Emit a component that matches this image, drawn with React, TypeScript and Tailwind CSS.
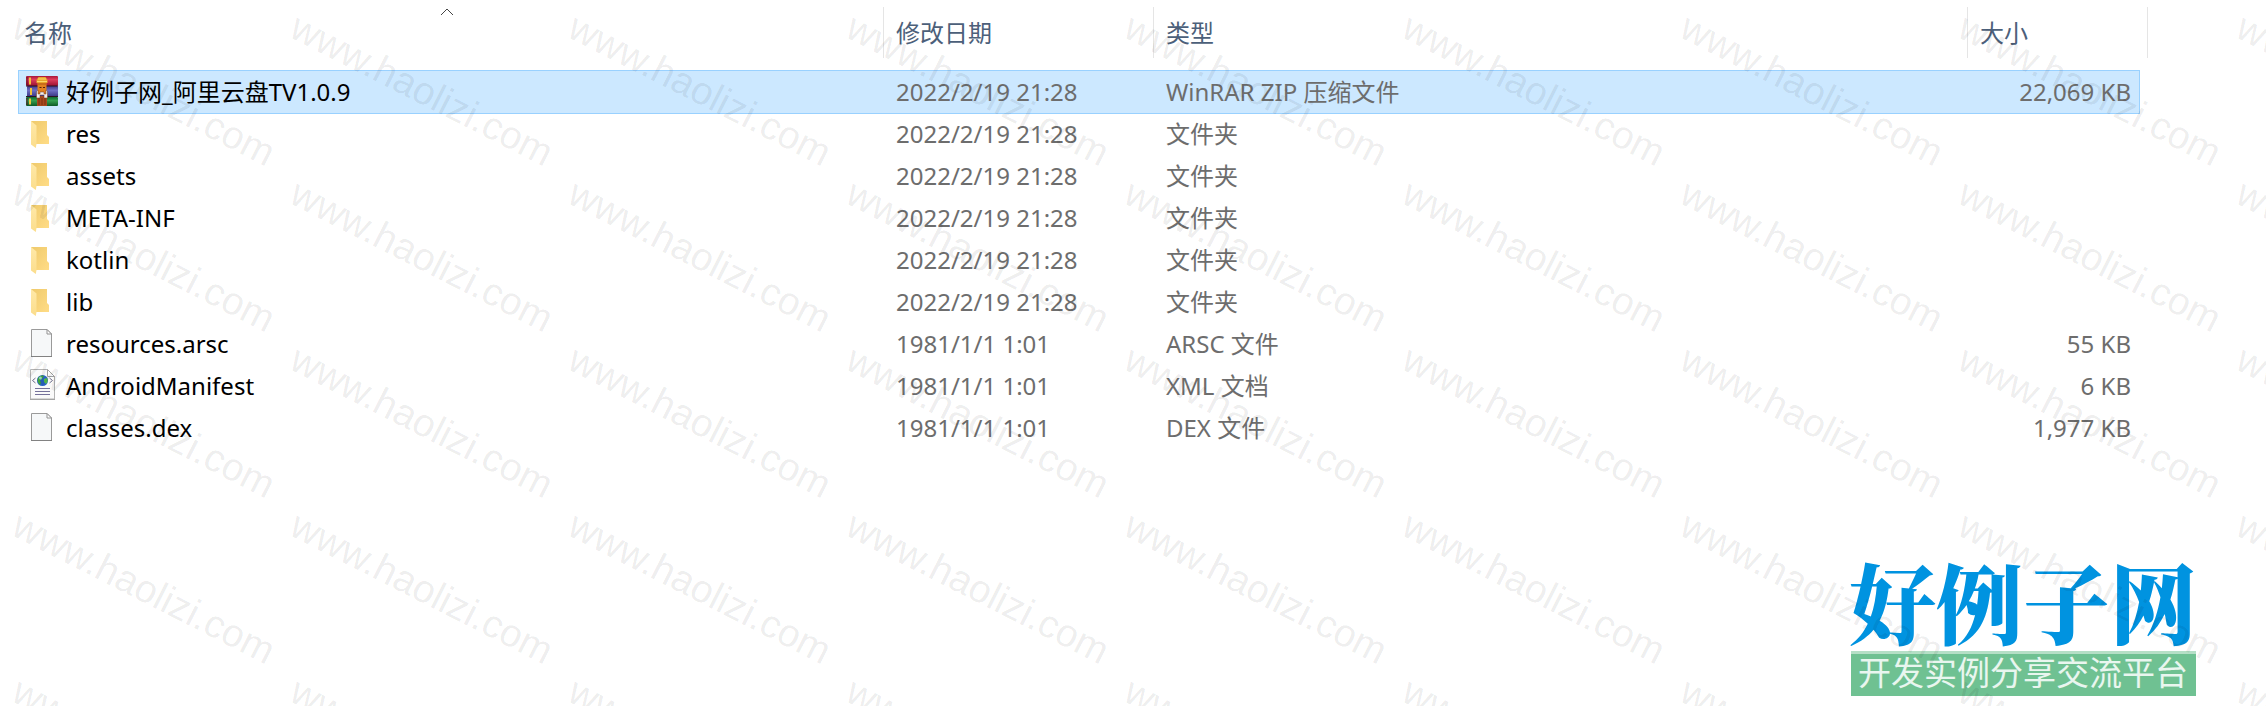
interface FileRow {
  name: string;
  date: string;
  type: string;
  size: string;
  icon: "rar" | "folder" | "file" | "xml";
}

const files: FileRow[] = [
  { name: "好例子网_阿里云盘TV1.0.9", date: "2022/2/19 21:28", type: "WinRAR ZIP 压缩文件", size: "22,069 KB", icon: "rar" },
  { name: "res", date: "2022/2/19 21:28", type: "文件夹", size: "", icon: "folder" },
  { name: "assets", date: "2022/2/19 21:28", type: "文件夹", size: "", icon: "folder" },
  { name: "META-INF", date: "2022/2/19 21:28", type: "文件夹", size: "", icon: "folder" },
  { name: "kotlin", date: "2022/2/19 21:28", type: "文件夹", size: "", icon: "folder" },
  { name: "lib", date: "2022/2/19 21:28", type: "文件夹", size: "", icon: "folder" },
  { name: "resources.arsc", date: "1981/1/1 1:01", type: "ARSC 文件", size: "55 KB", icon: "file" },
  { name: "AndroidManifest", date: "1981/1/1 1:01", type: "XML 文档", size: "6 KB", icon: "xml" },
  { name: "classes.dex", date: "1981/1/1 1:01", type: "DEX 文件", size: "1,977 KB", icon: "file" },
];

const WATERMARK_COUNT = 45;

function IconRar() {
  return (
    <svg width="32" height="32" viewBox="0 0 32 32" className="shrink-0">
      <defs>
        <linearGradient id="rar-red" x1="0" y1="0" x2="0" y2="1">
          <stop offset="0" stopColor="#a8173a" />
          <stop offset="0.35" stopColor="#dc3d5c" />
          <stop offset="1" stopColor="#9a1031" />
        </linearGradient>
        <linearGradient id="rar-blue" x1="0" y1="0" x2="0" y2="1">
          <stop offset="0" stopColor="#3f3888" />
          <stop offset="0.4" stopColor="#6f6fc4" />
          <stop offset="1" stopColor="#35327e" />
        </linearGradient>
        <linearGradient id="rar-green" x1="0" y1="0" x2="0" y2="1">
          <stop offset="0" stopColor="#0f6a2e" />
          <stop offset="0.4" stopColor="#34a050" />
          <stop offset="1" stopColor="#0d5a26" />
        </linearGradient>
      </defs>
      <rect x="0" y="0" width="32" height="10" rx="1" fill="url(#rar-red)" />
      <rect x="1" y="10" width="31" height="11" rx="1" fill="url(#rar-blue)" />
      <rect x="0" y="21" width="32" height="9" rx="1" fill="url(#rar-green)" />
      <path d="M0 10h32M0 20.5h32" stroke="#2b1524" strokeWidth="1" />
      <path d="M4 1.5v7M4 22.5v6" stroke="#f0c23a" strokeWidth="2" />
      <path d="M5 12v7" stroke="#f0c23a" strokeWidth="2" />
      <path d="M1 1v8M1 22v7" stroke="#5c0c20" strokeWidth="1" />
      <rect x="11" y="20" width="10" height="10" fill="#a8481c" />
      <path d="M13 22v7M16 22v7M19 22v7" stroke="#7d2f10" strokeWidth="1" />
      <path d="M10.500 7V4l2-3h7l2 3v3z" fill="#e8a52c" />
      <path d="M12 3h8M11 5.500h10" stroke="#fbd86a" strokeWidth="1" />
      <rect x="11.500" y="7" width="9" height="11" fill="#e2801f" />
      <path d="M12 8h8" stroke="#b05a14" strokeWidth="1" />
      <path d="M13.500 11.500h2M17 11.500h2" stroke="#54200a" strokeWidth="1" />
      <path d="M10.500 15l1.500-1v4h2v-2h4v2h2v-4l1.500 1v7h-3.500v-3h-4v3h-3.500z" fill="#f4f0ee" stroke="#6b3a28" strokeWidth="0.500" />
    </svg>
  );
}

function IconFolder() {
  return (
    <svg width="32" height="32" viewBox="0 0 32 32" className="shrink-0">
      <defs>
        <linearGradient id="folder-back" x1="0" y1="0" x2="1" y2="1">
          <stop offset="0" stopColor="#efca6c" />
          <stop offset="1" stopColor="#ffdc86" />
        </linearGradient>
        <linearGradient id="folder-front" x1="0" y1="0" x2="0" y2="1">
          <stop offset="0" stopColor="#ffe9a8" />
          <stop offset="1" stopColor="#fbdd8c" />
        </linearGradient>
      </defs>
      <path d="M5 3h16v14l2 2v7H10z" fill="url(#folder-back)" />
      <path d="M5 3l5.500 4.500V26l-.7 4L5 26.500z" fill="url(#folder-front)" />
    </svg>
  );
}

function IconFile() {
  return (
    <svg width="32" height="32" viewBox="0 0 32 32" className="shrink-0">
      <path d="M5.500 1.500h15.500l4.500 4.500v22.500H5.500z" fill="#f6f8f9" stroke="#9a9a9a" strokeWidth="1" />
      <path d="M5 28.500h21" stroke="#828282" strokeWidth="1" />
      <path d="M21 1.500V6H25.500z" fill="#ffffff" stroke="#929292" strokeWidth="1" />
    </svg>
  );
}

function IconXml() {
  return (
    <svg width="32" height="32" viewBox="0 0 32 32" overflow="visible" className="shrink-0">
      <path d="M4.500 -.5h17l7 7v22.500h-24z" fill="#fafafa" stroke="#b4b4b4" strokeWidth="1" />
      <path d="M4 29.500h25" stroke="#a5a5a5" strokeWidth="1" />
      <path d="M21.500 -.5v7h7z" fill="#ffffff" stroke="#a0a0a0" strokeWidth="1" />
      <circle cx="16.500" cy="10.500" r="5.500" fill="#2a63c4" />
      <path d="M12 8c2-3 5-3 6-2l-2 3-2 1 1 3-1 2c-2-2-3-4-2-7z" fill="#3fa53c" />
      <path d="M18 9l3-1c1 2 1 4-1 6l-2-2z" fill="#56c04a" />
      <circle cx="14.500" cy="8" r="1.500" fill="#b5e6f7" opacity="0.7" />
      <path d="M9.500 8L6.500 10.500l3 2.500M23.500 8l3 2.500-3 2.500" fill="none" stroke="#6f6f8c" strokeWidth="1" />
      <path d="M9 18.500h15M9 21.500h15M9 24.500h15" stroke="#75719a" strokeWidth="1" />
    </svg>
  );
}

function FileIcon({ icon }: { icon: FileRow["icon"] }) {
  if (icon === "rar") return <IconRar />;
  if (icon === "folder") return <IconFolder />;
  if (icon === "xml") return <IconXml />;
  return <IconFile />;
}

function SortCaret() {
  return (
    <svg width="14" height="8" viewBox="0 0 14 8" fill="none" className="absolute top-2 left-1/2 -ml-3">
      <path d="M1 7L7 1l6 6" stroke="#444444" strokeWidth="1" />
    </svg>
  );
}

function HeaderCell({ label, first, last }: { label: string; first?: boolean; last?: boolean }) {
  return (
    <th scope="col" aria-sort={first ? "ascending" : undefined} className="relative h-[71px] p-0 pt-[7px] align-top font-normal">
      <div className={last ? "-mr-[9px] border-r border-[#e5e5e5]" : "border-r border-[#e5e5e5]"}>
        <button className={first ? "block h-[51px] w-full pl-[5px] text-left" : "block h-[51px] w-full pl-3 text-left"}>
          {label}
        </button>
      </div>
      {first && <SortCaret />}
    </th>
  );
}

function Watermark() {
  return (
    <div aria-hidden="true" className="pointer-events-none absolute inset-0 grid auto-rows-[166px] grid-cols-[repeat(9,278px)] overflow-hidden">
      {Array.from({ length: WATERMARK_COUNT }, (_, i) => (
        <div key={i} className="flex items-center justify-center pt-3 pl-2.5">
          <span className="rotate-[27deg] font-['Liberation_Sans',sans-serif] text-[39px] leading-none whitespace-nowrap text-black/8">
            www.haolizi.com
          </span>
        </div>
      ))}
    </div>
  );
}

function SiteLogo() {
  return (
    <div className="absolute right-[69px] bottom-[10px] flex flex-col items-center whitespace-nowrap">
      <div className="pb-1 font-['Noto_Serif_CJK_SC','Noto_Sans_CJK_SC',serif] text-[87px] leading-[93px] font-black text-[#0093e0]">好例子网</div>
      <div className="h-[45px] w-[345px] border-t-3 border-[#b5dfc6] bg-[#6fc192] text-center text-[33px] leading-[38px] text-white/85">
        开发实例分享交流平台
      </div>
    </div>
  );
}

export default function App() {
  return (
    <main className="relative min-h-screen overflow-hidden bg-white pr-[127px] pl-[19px] font-['Noto_Sans','Noto_Sans_CJK_SC',sans-serif] text-[24px] leading-8 text-[#6d6d6d]">
      <table className="w-full table-fixed border-collapse text-left">
        <colgroup>
          <col />
          <col className="w-[270px]" />
          <col className="w-[814px]" />
          <col className="w-[171px]" />
        </colgroup>
        <thead className="text-[#4c607a]">
          <tr>
            <HeaderCell label="名称" first />
            <HeaderCell label="修改日期" />
            <HeaderCell label="类型" />
            <HeaderCell label="大小" last />
          </tr>
        </thead>
        <tbody>
          {files.map((file, i) => (
            <tr key={file.name} className={i === 0 ? "h-[42px] bg-[#cce8ff] outline outline-[#99d1ff]" : "h-[42px]"}>
              <td className="p-0 pl-[7px] text-black">
                <div className="flex items-center gap-2">
                  <FileIcon icon={file.icon} />
                  <span>{file.name}</span>
                </div>
              </td>
              <td className="p-0 pl-3">{file.date}</td>
              <td className="p-0 pl-3">{file.type}</td>
              <td className="p-0 pr-2 text-right">{file.size}</td>
            </tr>
          ))}
        </tbody>
      </table>
      <SiteLogo />
      <Watermark />
    </main>
  );
}
